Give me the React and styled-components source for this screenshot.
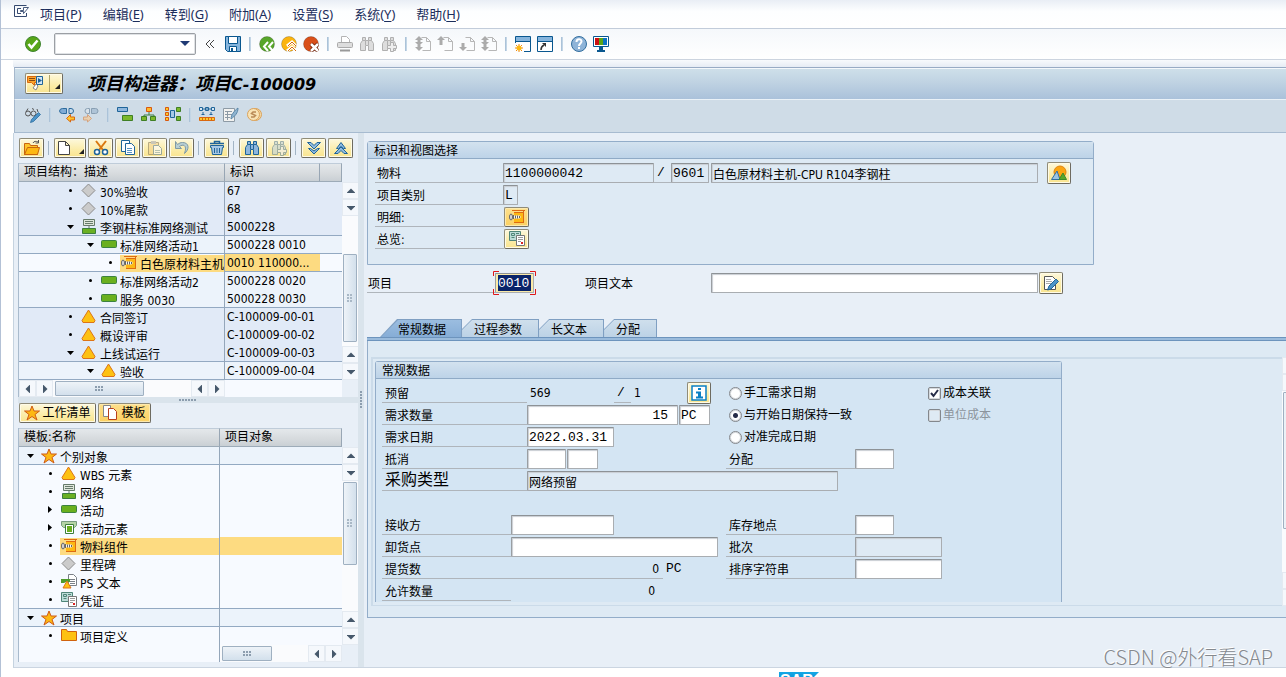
import React from 'react';
import styled, { createGlobalStyle, css } from 'styled-components';

const SANS = '"DejaVu Sans Condensed", "Noto Sans", "Noto Sans CJK SC", sans-serif';
const MENU = '"Noto Sans", "Noto Sans CJK SC", sans-serif';
const MONO = '"Liberation Mono", "Noto Sans CJK SC", monospace';

const Global = createGlobalStyle`
  *, *::before, *::after { box-sizing: border-box; }
  body {
    margin: 0;
    background: #fff;
    color: #000;
    font: 12px/18px ${SANS};
  }
  button, input { font: inherit; color: inherit; margin: 0; }
  button { cursor: pointer; }
`;

/* ---------- frame ---------- */

const Page = styled.div`
  position: relative;
  border-left: 1px solid #b3c1d6;
  overflow: hidden;
`;

const MenuBar = styled.nav`
  display: flex;
  align-items: center;
  gap: 21px;
  height: 29px;
  padding-left: 13px;
  background: linear-gradient(#e9eef5, #fdfeff 40%, #fff);
  border-bottom: 1px solid #c2ccda;
  font: 13px/18px ${MENU};
  color: #1c2e5c;
`;

const MenuItem = styled.button`
  padding: 0;
  border: 0;
  background: none;
  white-space: nowrap;
  u { text-underline-offset: 2px; }
`;

const MenuIcon = styled(MenuItem)`
  display: flex;
  margin: 0 -10px 6px 0;
`;

const SystemBar = styled.div`
  display: flex;
  align-items: center;
  gap: 6px;
  height: 31px;
  padding: 0 24px 1px;
  background: linear-gradient(#f5f8fb, #fff);
  border-bottom: 1px solid #ccd4df;
`;

const IconButton = styled.button`
  display: flex;
  flex: none;
  width: 16px;
  height: 16px;
  padding: 0;
  border: 0;
  background: none;
`;

const Sep = styled.span`
  flex: none;
  width: 2px;
  height: 14px;
  margin: 0 ${p => p.$m ?? 0}px;
  background: linear-gradient(90deg, #9fb9d2, #cfdfec);
`;

const Command = styled.div`
  display: flex;
  align-items: center;
  width: 142px;
  height: 22px;
  margin: 0 3px 0 7px;
  border: 1px solid #9b9fa4;
  border-radius: 2px;
  background: #fff;
  box-shadow: inset 0 0 0 1px #dfe2e5;
  input { flex: 1; min-width: 0; height: 18px; border: 0; background: none; outline: 0; }
  button { display: flex; padding: 0 5px; border: 0; background: none; }
`;

const Collapse = styled.button`
  display: flex;
  padding: 0;
  margin-right: 4px;
  border: 0;
  background: none;
`;

const Frame = styled.div`
  margin: 0 0 0 12px;
  padding-top: 7px;
  background: linear-gradient(#f8fafc, #e6ecf4 7px, transparent 7px);
`;

const TitleBar = styled.header`
  display: flex;
  align-items: center;
  gap: 24px;
  height: 33px;
  margin-left: 1px;
  padding: 0 10px 1px;
  border-top: 1px solid #98abc4;
  border-bottom: 1px solid #eaf1f7;
  border-left: 1px solid #a6b8cc;
  box-shadow: inset 0 1px #f4f8fb;
  background: linear-gradient(#cfe0ea, #c0d3e3 45%, #aac1da);
`;

const Title = styled.h1`
  margin: 0;
  font: italic bold 18px/24px "Noto Sans CJK SC", sans-serif;
  white-space: nowrap;
  span { font: italic bold 16px/24px "DejaVu Sans", sans-serif; }
`;

const AppBar = styled.div`
  display: flex;
  align-items: center;
  gap: 8px;
  height: 33px;
  margin-left: 1px;
  padding: 0 11px 3px 10px;
  border-left: 1px solid #a6b8cc;
  background: #cfdce7;
  border-bottom: 1px solid #a7bbd0;
`;

const Workspace = styled.main`
  display: flex;
  border-left: 1px solid #c5d3e0;
  border-bottom: 1px solid #cbd5e1;
  background: #e8eff7;
`;

/* ---------- buttons ---------- */

const GoldButton = styled.button`
  display: flex;
  align-items: center;
  justify-content: ${p => (p.$split ? 'space-between' : 'center')};
  flex: none;
  gap: 2px;
  width: ${p => (p.$w ? p.$w + 'px' : 'auto')};
  height: ${p => p.$h ?? 20}px;
  padding: 0 1px;
  border: 1px solid;
  border-color: #908c78 #6e6b60 #6e6b60 #908c78;
  border-radius: 2px;
  background: ${p => (p.$on ? 'linear-gradient(#fde08c, #fbd061)' : 'linear-gradient(#fdf8dc, #fbeca8 60%, #f9e48f)')};
  box-shadow: inset 0 0 0 1px ${p => (p.$on ? '#fde9ae' : '#fffbe6')};
  white-space: nowrap;
  line-height: 20px;
`;

const TitleButton = styled(GoldButton)`
  width: 38px;
  height: 21px;
  padding: 0 2px 0 1px;
  i { width: 1px; height: 17px; background: #b0a468; }
`;

/* ---------- left side ---------- */

const Side = styled.aside`
  flex: none;
  width: 344px;
  padding: 0 0 5px 4px;
`;

const TreeTools = styled.div`
  display: flex;
  align-items: center;
  gap: 2px;
  height: 30px;
  padding-left: 1px;
`;

const ToolSep = styled.span`
  width: 1px;
  height: 14px;
  margin: 0 3px 0 2px;
  background: #a3b5c6;
`;

const TreeBox = styled.div`
  display: flex;
  border-left: 1px solid #a9bbcd;
`;

const TreeTable = styled.table`
  width: 323px;
  table-layout: fixed;
  border-collapse: separate;
  border-spacing: 0;
`;

const Col = styled.col`
  width: ${p => (p.$w ? p.$w + 'px' : 'auto')};
`;

const HeadCell = styled.th`
  height: 19px;
  padding: 0 0 0 5px;
  font-weight: normal;
  text-align: left;
  line-height: 17px;
  border-top: 1px solid #bfccd9;
  border-right: 1px solid #98a6b4;
  border-bottom: 1px solid #9dabb8;
  background: linear-gradient(#e4e8eb, #d6dadd 60%, #c9cfd4);
`;

const tones = { a: '#e1eaf7', b: '#ecf3fb', c: '#f7faff' };

const Cell = styled.td`
  height: 18px;
  padding: ${p => (p.$text ? '0 0 0 2px' : 0)};
  overflow: hidden;
  white-space: nowrap;
  line-height: 18px;
  background: ${p => (p.$hot ? '#fddb81' : tones[p.$tone])};
  box-shadow: inset ${p => (p.$edge ? '-1px' : 0)} 0 #94a6ba, inset 0 ${p => (p.$line ? '-1px' : 0)} #93a9c2;
`;

const Node = styled.div`
  display: flex;
  align-items: flex-start;
  height: 17px;
  margin-right: 1px;
  padding-left: ${p => 1 + p.$level * 20}px;
  overflow: hidden;
`;

const Twist = styled.span`
  display: flex;
  flex: none;
  align-items: center;
  justify-content: center;
  width: 20px;
  height: 16px;
`;

const NodeBody = styled.span`
  display: flex;
  flex: 1;
  height: 17px;
  gap: 3px;
  padding-left: 1px;
  background: ${p => (p.$hot ? '#fddb81' : 'none')};
  svg { flex: none; }
  span { line-height: 20px; }
`;

const VBar = styled.div`
  display: flex;
  flex-direction: column;
  flex: none;
  width: 16px;
  margin-top: ${p => p.$top ?? 0}px;
  background: #f9fbfd;
`;

const Track = styled.div`
  flex: 1;
  display: flex;
  flex-direction: ${p => (p.$row ? 'row' : 'column')};
  padding: ${p => (p.$row ? `1px 1px 0 ${p.$skip}px` : `${p.$skip}px 1px 0`)};
  background: #fafbfd;
`;

const Thumb = styled.div`
  display: flex;
  align-items: center;
  justify-content: center;
  width: ${p => (p.$row ? p.$len + 'px' : '14px')};
  height: ${p => (p.$row ? '15px' : p.$len + 'px')};
  border: 1px solid #9fb0c1;
  border-radius: 1px;
  background: linear-gradient(${p => (p.$row ? '180deg' : '90deg')}, #eef3f8, #d3e0ec);
`;

const Arrow = styled.button`
  display: flex;
  align-items: center;
  justify-content: center;
  flex: none;
  width: 17px;
  height: 17px;
  padding: 0;
  border: 1px solid #e4eaf1;
  background: #f5f8fc;
`;

const HBar = styled.div`
  display: flex;
  height: 17px;
  margin-right: 16px;
  border-left: 1px solid #a9bbcd;
  background: #f7faff;
`;

const HPart = styled.div`
  display: flex;
  width: ${p => p.$w}px;
  border-right: ${p => (p.$edge ? '1px solid #94a6ba' : 0)};
`;

const Grip = styled.div`
  display: flex;
  align-items: center;
  justify-content: center;
  background: #dae4ec;
  ${p => (p.$col ? css`flex: none; width: 6px;` : css`height: 6px;`)}
`;

const SwitchBar = styled.div`
  display: flex;
  align-items: flex-start;
  gap: 2px;
  height: 25px;
  padding-left: 1px;
`;

/* ---------- right side ---------- */

const Detail = styled.section`
  flex: 1;
  min-width: 0;
  padding: 8px 0 0 3px;
  overflow: hidden;
`;

const Panel = styled.section`
  max-width: ${p => p.$max}px;
  border: 1px solid #93adc9;
  border-bottom-width: ${p => (p.$open ? 0 : 1)}px;
  border-radius: 3px 3px 0 0;
  background: ${p => p.$bg};
`;

const PanelTitle = styled.h2`
  height: 17px;
  margin: 0;
  padding-left: 6px;
  font: 12px/18px ${SANS};
  border-bottom: 1px solid #8faac6;
  background: linear-gradient(#d3e2ef, #bdd3e8);
`;

const Rows = styled.div`
  display: flex;
  flex-direction: column;
  gap: 2px;
  padding: ${p => p.$pad};
`;

const Row = styled.div`
  display: flex;
  align-items: center;
  height: 20px;
`;

const Part = styled.div`
  display: flex;
  align-items: center;
  flex: none;
  width: ${p => p.$w}px;
  height: 20px;
`;

const Label = styled.label`
  flex: none;
  width: ${p => p.$w}px;
  height: 20px;
  padding-left: ${p => p.$in ?? 3}px;
  border-bottom: 1px solid ${p => (p.$plain ? 'transparent' : '#afb5bb')};
  font-size: ${p => (p.$big ? 16 : 12)}px;
  line-height: ${p => (p.$big ? 18 : 22)}px;
  white-space: nowrap;
`;

const Value = styled.span`
  flex: none;
  width: ${p => p.$w}px;
  height: 20px;
  padding: 0 4px 0 3px;
  border-bottom: 1px solid ${p => (p.$line ? '#afb5bb' : 'transparent')};
  text-align: ${p => (p.$right ? 'right' : 'left')};
  font-family: ${p => (p.$mono ? MONO : SANS)};
  font-size: ${p => (p.$mono ? 13 : 12)}px;
  line-height: 20px;
`;

const Field = styled.input`
  flex: none;
  width: ${p => p.$w}px;
  height: 20px;
  margin-right: ${p => p.$gap ?? 0}px;
  padding: 0 ${p => (p.$right ? 9 : 2)}px 0 1px;
  border: 1px solid #a9adb1;
  border-top-color: #8d9296;
  border-left-color: #9a9ea2;
  border-radius: 1px;
  outline: 0;
  background: ${p => (p.readOnly ? '#deeaf4' : '#fff')};
  box-shadow: inset 1px 1px 1px #c9ced3;
  font: ${p => (p.$mono ? `13px/18px ${MONO}` : `12px/18px ${SANS}`)};
  text-align: ${p => (p.$right ? 'right' : 'left')};
`;

const FocusField = styled(Field)`
  padding: 1px 2px;
  color: #fff;
  background: linear-gradient(#0a246a, #0a246a) content-box, #fbeaa8;
  box-shadow: none;
`;

const FocusBox = styled.div`
  position: relative;
  display: flex;
  svg { position: absolute; left: -2px; top: -2px; pointer-events: none; }
`;

const Tabs = styled.div`
  display: flex;
  height: 18px;
  margin-top: 26px;
  padding-left: 13px;
`;

const Tab = styled.button`
  position: relative;
  isolation: isolate;
  height: 18px;
  padding: 2px ${p => (p.$on ? '16px 0 18px' : '17px 0 12px')};
  border: 0;
  background: #7f9fc2;
  line-height: 18px;
  --cut: polygon(${p => (p.$on ? '0 100%, 17px 0' : '0 100%, 0 10px, 10px 0')}, 100% 0, 100% 100%);
  clip-path: var(--cut);
  &::before {
    content: '';
    position: absolute;
    z-index: -1;
    inset: 1px 1px 0 ${p => (p.$on ? 1 : 0)}px;
    clip-path: var(--cut);
    background: ${p => (p.$on ? 'linear-gradient(#9bbde0, #86add6)' : 'linear-gradient(#cfdfec, #bcd2e6)')};
  }
`;

const TabBody = styled.div`
  display: flex;
  border-top: 1px solid #6d94bd;
  box-shadow: inset 0 2px #9abbdc, inset 0 3px #6d94bd, inset 1px 0 #93adc9, inset 0 -1px #93adc9;
  padding: 19px 0 12px 4px;
  background: #deeaf4;
`;

const Scroller = styled.div`
  flex: 1;
  min-width: 0;
  padding: 2px 2px 3px;
  border: solid #cbdbe9;
  border-width: 2px 0 1px 2px;
`;

const ScrollEdge = styled.div`
  display: flex;
  flex: none;
  width: 4px;
  overflow: hidden;
`;

const Choice = styled.label`
  display: flex;
  align-items: center;
  gap: 2px;
  height: 20px;
  padding-left: ${p => p.$in ?? 0}px;
  color: ${p => (p.$off ? '#8c949c' : '#000')};
  line-height: 22px;
  white-space: nowrap;
  input {
    appearance: none;
    flex: none;
    width: 13px;
    height: 13px;
    border: 1px solid #83878c;
    background: ${p => (p.$off ? '#deeaf4' : '#fff')};
    box-shadow: inset 0 0 0 1px #d5d9dd;
  }
  input[type='radio'] { border-radius: 50%; }
  input[type='radio']:checked { background: radial-gradient(circle, #262c48 0 2px, #fff 3px); }
  input[type='checkbox'] { border-radius: 2px; }
`;

const TickWrap = styled.span`
  position: relative;
  display: flex;
  svg { position: absolute; left: 2px; top: 2px; pointer-events: none; }
`;

const StatusBar = styled.footer`
  display: flex;
  height: 9px;
  padding: 4px 0 0 778px;
  overflow: hidden;
  background: #fff;
`;

const Brand = styled.span`
  width: 40px;
  height: 20px;
  padding-left: 1px;
  clip-path: polygon(0 0, 100% 0, 50% 100%, 0 100%);
  background: linear-gradient(#14a8e6, #0b6fc0);
  color: #fff;
  font: bold 16px/18px "Liberation Sans", sans-serif;
`;

const Watermark = styled.div`
  position: absolute;
  right: 13px;
  bottom: 6px;
  font: 300 20px/28px "Noto Sans CJK SC", sans-serif;
  color: #85898e;
  text-shadow: -1px -1px #fff;
  white-space: nowrap;
`;

/* ---------- drawings ---------- */

const Svg = ({ w = 16, h = 16, children }) => (
  <svg width={w} height={h} viewBox={`0 0 ${w} ${h}`} fill="none" aria-hidden="true">{children}</svg>
);

const Tri = ({ d, c = '#46586b' }) => {
  const shapes = { up: 'M0 5.500L4 1.500L8 5.500V6H0z', down: 'M0 2H8V2.500L4 6.500L0 2.500z', left: 'M6 0V8H5.500L1.500 4L5.500 0z', right: 'M2 0V8H2.500L6.500 4L2.500 0z' };
  return <Svg w={8} h={8}><path d={shapes[d]} fill={c} /></Svg>;
};

const Dots = ({ cols, rows, c = '#8c9dae' }) => (
  <Svg w={cols * 3} h={rows * 3}>
    {Array.from({ length: cols * rows }, (_, i) => (
      <rect key={i} x={(i % cols) * 3} y={Math.floor(i / cols) * 3} width="2" height="2" fill={c} />
    ))}
  </Svg>
);

const Corner = () => <Svg w={5} h={16}><path d="M5 9v5H0z" fill="#222" /></Svg>;

const Binoculars = ({ s, f, plus }) => (
  <>
    <path d="M3.500 1.500h3v3h3v-3h3v3l2 3v7h-5v-5h-3v5h-5v-7l2-3z" fill={f} stroke={s} />
    <path d="M3.500 4.500h3M9.500 4.500h3M6.500 5v4M9.500 5v4" stroke={s} />
    {plus && <path d="M9.500 6.500h3v3h3v3h-3v3h-3v-3h-3v-3h3z" fill="#eee" stroke={s} />}
  </>
);

const PageNav = ({ arrows }) => (
  <>
    <path d="M6.500 1.500h5l4 4v9h-8M11.500 1.500v4h4" stroke="#b7b7b7" />
    <path d={arrows} fill="#ababab" />
  </>
);

const Bubble = ({ children, fill }) => (
  <>
    <circle cx="8" cy="8" r="7.500" fill={fill} stroke="#0003" />
    {children}
  </>
);

const icons = {
  exit: <><path d="M12.500 8v3.500H.5V.5h12" stroke="#34486e" /><path d="M7 3.500H3.500v5H7" stroke="#34486e" /><path d="M6.500 5.500h3v-3h5l-5 6v-2h-3z" fill="#fff" stroke="#34486e" strokeWidth=".9" /></>,
  ok: <><circle cx="8" cy="8" r="7.500" fill="#58a618" stroke="#3f8430" /><path d="M3.500 8l3 3.500 6-7" stroke="#fff" strokeWidth="2.500" /></>,
  save: <><path d="M.5.500h15v15H2.500l-2-2z" fill="#85b4dc" stroke="#09578f" /><path d="M3.500.500h9v7h-9z" fill="#fff" stroke="#09578f" /><path d="M4.500 10.500h7v5h-7z" fill="#fff" stroke="#09578f" /><path d="M6 12h2v3H6z" fill="#09578f" /></>,
  back: <Bubble fill="#58a62a"><path d="M9 6l-4 4.500L9 15M14 6l-4 4.500 4 4.500" stroke="#fff" strokeWidth="2" /></Bubble>,
  upc: <Bubble fill="#fbb40f"><path d="M6 10l5-4 4 4M6 15l5-4 4 4" stroke="#fff" strokeWidth="3" /><path d="M7 10l4-4 4 4M7 15l4-4 4 4" stroke="#d6690c" /></Bubble>,
  cancel: <Bubble fill="#d9501a"><path d="M8 8l7 7M15 8l-7 7" stroke="#6d2008" strokeWidth="4" /><path d="M8 8l7 7M15 8l-7 7" stroke="#fff" strokeWidth="2.500" /></Bubble>,
  print: <><path d="M4.500 7V.5h5l3 3V7" fill="#fff" stroke="#b4b4b4" /><rect x=".5" y="6.500" width="15" height="5" rx="1" fill="#ddd" stroke="#aaa" /><path d="M3 14.500h10" stroke="#999" strokeWidth="2" /></>,
  findG: <Binoculars s="#b0b0b0" f="#ddd" />,
  findMoreG: <Binoculars s="#b0b0b0" f="#ddd" plus />,
  firstPage: <PageNav arrows="M4 0l4 4H5.500v2H8L4 10 0 6h2.500V4H0zM2.500 9h3v2H8l-4 4-4-4h2.500z" />,
  prevPage: <PageNav arrows="M4 0l4 4H5.500v5h-3V4H0z" />,
  nextPage: <PageNav arrows="M2.500 7h3v4H8l-4 4-4-4h2.500z" />,
  lastPage: <PageNav arrows="M4 0l4 4H5.500v2H8l-4 4-4-4h2.500V4H0zM2.500 9h3v2H8l-4 4-4-4h2.500z" />,
  newWin: <><path d="M.5 7V.5h15v15H9" stroke="#09578f" fill="#fff" /><path d="M1 1h14v4H1z" fill="#85b4dc" /><path d="M0 5.500h16" stroke="#09578f" /><path d="M4 8v8M0 12h8M1 9l6 6M7 9l-6 6" stroke="#f08a12" /><circle cx="4" cy="12" r="2.500" fill="#fdb913" /></>,
  shortcut: <><path d="M.5.500h15v15H.5z" stroke="#09578f" fill="#fff" /><path d="M1 1h14v4H1z" fill="#85b4dc" /><path d="M0 5.500h16" stroke="#09578f" /><path d="M4 14c0-3 1-4 3-5" stroke="#333" strokeWidth="1.500" /><path d="M5 7h4v4z" fill="#333" /></>,
  help: <><circle cx="8" cy="8" r="7.500" fill="#8fb4d8" stroke="#336e9e" /><path d="M5.500 6c0-3.500 5-3.500 5-.5 0 2-2.500 2-2.500 4.500M8 11v2" stroke="#fff" strokeWidth="2" /></>,
  monitor: <><path d="M.5.500h15v10H.5z" fill="#fff" stroke="#09578f" /><path d="M2 2h4v7H2z" fill="#cc1010" /><path d="M6 2h4v7H6z" fill="#5aa616" /><path d="M10 2h4v7h-4z" fill="#0c73c2" /><path d="M6 11h4v3h2v2H4v-2h2z" fill="#09578f" /></>,
  glasses: <><path d="M1 5l2-3.500M7 1.500l2 1M12 2l1 3" stroke="#555" /><circle cx="3" cy="6.500" r="2.500" stroke="#555" /><circle cx="8.500" cy="6.500" r="2.500" stroke="#555" /><path d="M13.500 5.500l2 2-7 7-3 1 1-3z" fill="#4d94c8" stroke="#2c6d9f" strokeWidth=".8" /></>,
  prev: <><path d="M.5 4a3 3 0 0 1 3-2.500h4v5h-4A3 3 0 0 1 .5 4z" fill="#7fabd5" stroke="#2c6a9c" /><path d="M10 1.500h2a2.500 2.500 0 0 1 0 5h-2z" fill="#c6dcef" stroke="#2c6a9c" /><path d="M7.500 11.500l4-4v2.500h4v3h-4V15z" fill="#fdc52c" stroke="#d9680f" /></>,
  next: <g opacity=".6"><path d="M4.500 1.500h2v5h-2a2.500 2.500 0 0 1 0-5z" fill="#dfe7ee" stroke="#5b7892" /><path d="M8.500 1.500h4a2.500 2.500 0 0 1 0 5h-4z" fill="#9ab5ce" stroke="#5b7892" /><path d="M8.500 11.500l-4-4v2.500h-4v3h4V15z" fill="#fdc98a" stroke="#d9803f" /></g>,
  gantt: <><path d="M.5.500h10v4H.5z" fill="#8fb7dd" stroke="#1f6499" /><path d="M5.500 8.500h10v5h-10z" fill="#7cb82b" stroke="#3f7f25" /></>,
  hierarchy: <><path d="M8 5v3M3 11V8h10v3" stroke="#3f7f45" /><path d="M5.500.500h5v4h-5z" fill="#fdb92b" stroke="#d9580f" /><path d="M.5 9.500h5v4h-5zM9.500 9.500h5v4h-5z" fill="#7cb82b" stroke="#3f7f25" /></>,
  network: <><path d="M.5.500h3v3h-3zM.5 5.500h3v3h-3zM.5 10.500h3v3h-3z" fill="#fdc92b" stroke="#d9580f" /><path d="M5.500 3.500h4v7h-4z" fill="#a8c9e6" stroke="#1f6499" /><path d="M11.500.500h4v4h-4zM11.500 9.500h4v4h-4z" fill="#7cb82b" stroke="#3f7f25" /></>,
  capacity: <><path d="M.5.500h3v3h-3zM6.500.500h3v3h-3zM12.500.500h3v3h-3zM3 2h10" stroke="#1f6499" fill="#d5e6f3" /><path d="M4 5v3M12 5v3M2.500 7.500h3M10.500 7.500h3" stroke="#1f6499" /><path d="M.5 10.500h15v3H.5z" fill="#fdc92b" stroke="#d9680f" /><path d="M3.500 11v2M6.500 11v2M9.500 11v2M12.500 11v2" stroke="#d9680f" /></>,
  edit: <><path d="M.5 1.500h11v13H.5z" fill="#f2f2f0" stroke="#8d9aa5" /><path d="M2 4.500h7M2 7.500h7M2 10.500h5M4.500 4v9" stroke="#8d9aa5" /><path d="M15 1c0 5-3 8-7 11 0-4 3-8 7-11z" fill="#8fb4d0" stroke="#5b87a8" /></>,
  coin: <><circle cx="8.500" cy="7.500" r="6" fill="#f3d9a8" stroke="#dba25a" /><circle cx="6.500" cy="7.500" r="6" fill="#f8e3b5" stroke="#dba25a" /><path d="M9 5H6L4.500 6.500l4 2L7 10H4" stroke="#b98a56" strokeWidth="1.500" /></>,
  speech: <><path d="M.5 1.500h9v6h-2v3l-3-3h-4z" fill="#fda52b" stroke="#d9680f" /><path d="M2 3.500h6M2 5.500h6" stroke="#8a4a10" /><path d="M9.500 1.500h6v8h-6z" fill="#d0e4f5" stroke="#1f6499" /><path d="M11 3v5l4-2.500z" fill="#1f6499" /><path d="M6 13l3-4 2 2-2 4z" fill="#fff" stroke="#888" /></>,
  open: <><path d="M.5 14.500v-11h5l1 2h7v9z" fill="#fdc52c" stroke="#c8650f" /><path d="M3.500 7.500h12l-2 7H.5z" fill="#fdb813" stroke="#c8650f" /><path d="M9 3c1-2 3-2 5-1M14.500 0v3h-3" stroke="#555" /></>,
  create: <path d="M2.500 1.500h7l4 4v9h-11zM9.500 1.500v4h4" fill="#fff" stroke="#444" />,
  cut: <><path d="M3 1l7 9M13 1L6 10" stroke="#d9780f" strokeWidth="2" /><circle cx="4" cy="12" r="2.500" fill="#fff" stroke="#1f6499" strokeWidth="1.500" /><circle cx="12" cy="12" r="2.500" fill="#fff" stroke="#1f6499" strokeWidth="1.500" /></>,
  copy: <><path d="M1.500.500h8v11h-8z" fill="#fff" stroke="#1f6499" /><path d="M5.500 3.500h6l3 3v8h-9z" fill="#fff" stroke="#1f6499" /><path d="M7 8.500h5M7 10.500h5M7 12.500h5" stroke="#5b93c2" /></>,
  paste: <g opacity=".6"><path d="M1.500 2.500h10v12h-10z" fill="#f5d48c" stroke="#8a7c58" /><path d="M4 1h5v3H4z" fill="#aaa" /><path d="M6.500 5.500h5l3 3v6h-8z" fill="#fff" stroke="#5a7d96" /><path d="M8 10.500h5M8 12.500h5" stroke="#8aa8bd" /></g>,
  undo: <path d="M1.500 1.500v7h6L5.500 6.500c4-3 8-1 5 7 5-4 5-11-2-11-2 0-3 .5-5 2z" fill="#b8cfd4" stroke="#7f9aa4" />,
  trash: <><path d="M1 3.500h14M5.500 3V1.500h5V3" stroke="#1f6499" strokeWidth="1.500" /><path d="M1.500 5.500h13v2h-1l-1 7h-9l-1-7h-1z" fill="#a8c9e6" stroke="#1f6499" /><path d="M5.500 8v5M8 8v5M10.500 8v5" stroke="#1f6499" /></>,
  find: <Binoculars s="#1f6499" f="#8fb7dd" />,
  findMore: <g opacity=".65"><Binoculars s="#6f8c98" f="#c5d5d8" plus /></g>,
  expand: <><path d="M1.500 2.500h3.500l3 3 3-3h3.500L8 9z" fill="#8fbbe0" stroke="#1f6499" /><path d="M4.500 8.500L8 11l3.500-2.500h2L8 14 2.500 8.500z" fill="#8fbbe0" stroke="#1f6499" /></>,
  collapse: <><path d="M1.500 13.500h3.500l3-3 3 3h3.500L8 7z" fill="#8fbbe0" stroke="#1f6499" /><path d="M3.500 8.500L8 2.500l4.500 6h-2L8 6.500l-2.500 2z" fill="#8fbbe0" stroke="#1f6499" /></>,
  milestone: <path d="M7.500 1l6.500 6.500L7.500 14 1 7.500z" fill="#cbcbcb" stroke="#8c8c8c" />,
  net: <><path d="M2.500.500h11v6h-11z" fill="#dfe6dc" stroke="#667a6a" /><path d="M4 2.500h8M4 4.500h8M8 7v3" stroke="#667a6a" /><path d="M1.500 9.500h13v5h-13z" fill="#6ab023" stroke="#3c7d3d" /></>,
  activity: <rect x=".5" y="3.500" width="15" height="7" rx="1" fill="#6ab01e" stroke="#3c8240" />,
  wbs: <path d="M7.500 1L14 11.500 13 13.500H2L1 11.500z" fill="#fdc113" stroke="#dd7417" strokeLinejoin="round" />,
  star: <path d="M8 1l2 5h5.500l-4.500 3.500 2 5.500-5-3.500L3 15l2-5.500L.5 6H6z" fill="#fdb813" stroke="#cf5a16" />,
  element: <><path d="M.5 1.500h15v4l-2 2h-11l-2-2z" fill="#b5d4a5" stroke="#7a9c80" /><path d="M4.500 4.500h8v9h-8z" fill="#fff" stroke="#3c7d3d" /><path d="M6 6h5v6H6z" fill="#6ab01e" /></>,
  component: <><path d="M3 1.500h13M5 3.500h9.500v10H5" fill="#fdb813" stroke="#dd6a13" /><path d="M14.500 2v12" stroke="#dd6a13" /><ellipse cx="2" cy="8" rx="1.500" ry="3" fill="#ddd" stroke="#666" /><path d="M4 6.500h6.500L12 8l-1.500 1.500H4z" fill="#f4f4f4" /><path d="M4.500 6v4M6.500 6.500v3M8.500 6.500v3M10.500 7v2" stroke="#666" /></>,
  pstext: <><path d="M7.500.500h5l3 3v8h-8zM9 5.500h5M9 7.500h5M9 9.500h5" fill="#fff" stroke="#7a8087" /><path d="M0 5h9v3H5L3 9H0z" fill="#4f9c2c" /><path d="M6 7l4 7H2z" fill="#fdc113" stroke="#dd7417" /></>,
  document: <><path d="M.5.500h11v9H.5z" fill="#bcdcd8" stroke="#4f8578" /><path d="M2.500 2.500h3v2h-3zM7 2.500h3M2.500 6.500h3" stroke="#4f8578" /><path d="M7.500 4.500h8v10h-8z" fill="#fff" stroke="#777" /><path d="M9 6.500h5M9 8.500h5M9 10.500h3" stroke="#999" /><path d="M12 11h2v2h-2z" fill="#d22" /></>,
  folder: <path d="M.5 12.500V1.500h5l1 2h9v9z" fill="#fdc113" stroke="#d0620f" />,
  template: <><path d="M.5.500h7v11h-7z" fill="#fff" stroke="#888" /><path d="M5.500 3.500h5l3 3v8h-8z" fill="#fff" stroke="#b8401c" /></>,
  picture: <><circle cx="9" cy="7" r="6" fill="#fba512" stroke="#e08410" /><path d="M.5 14.500L6 6l3 8.500z" fill="#9cc3e2" stroke="#2e6ea2" /><path d="M8 14.500L12 8l3.500 6.500z" fill="#5aa62a" stroke="#3c8a2a" /></>,
  note: <><path d="M1.500 1.500h8l3 3v10h-11z" fill="#fff" stroke="#555" /><path d="M3 4.500h5M3 6.500h6M3 8.500h5" stroke="#aaa" /><path d="M13 4l2.500 2.500L8 14l-3.500 1L6 11z" fill="#4d94c8" stroke="#1f6499" /></>,
  info: <><path d="M1 1h14v14H1z" fill="#fff" stroke="#0a80c4" strokeWidth="1.500" /><path d="M7 3h3v2H7zM5 6.500h5v5h2v2H5v-2h2v-3H5z" fill="#0a80c4" /></>,
};

const Icon = ({ n }) => <Svg>{icons[n]}</Svg>;

/* ---------- data ---------- */

const menus = [['项目', 'P'], ['编辑', 'E'], ['转到', 'G'], ['附加', 'A'], ['设置', 'S'], ['系统', 'Y'], ['帮助', 'H']];

const systemTools = ['save', '|', 'back', 'upc', 'cancel', '|', 'print', 'findG', 'findMoreG', '|', 'firstPage', 'prevPage', 'nextPage', 'lastPage', '|', 'newWin', 'shortcut', '|', 'help', 'monitor'];
const appTools = ['glasses', '|', 'prev', 'next', '|', 'gantt', 'hierarchy', 'network', '|', 'capacity', 'edit', 'coin'];
const treeTools = ['open', '|', 'create', 'cut', 'copy', 'paste', 'undo', '|', 'trash', '|', 'find', 'findMore', '|', 'expand', 'collapse'];

const projectTree = [
  { l: 2, m: '·', i: 'milestone', t: '30%验收', id: '67', tone: 'a' },
  { l: 2, m: '·', i: 'milestone', t: '10%尾款', id: '68', tone: 'a' },
  { l: 2, m: 'v', i: 'net', t: '李钢柱标准网络测试', id: '5000228', tone: 'a', line: true },
  { l: 3, m: 'v', i: 'activity', t: '标准网络活动1', id: '5000228 0010', tone: 'b', line: true },
  { l: 4, m: '·', i: 'component', t: '白色原材料主机', id: '0010 110000...', tone: 'c', line: true, hot: true },
  { l: 3, m: '·', i: 'activity', t: '标准网络活动2', id: '5000228 0020', tone: 'b' },
  { l: 3, m: '·', i: 'activity', t: '服务 0030', id: '5000228 0030', tone: 'b', line: true },
  { l: 2, m: '·', i: 'wbs', t: '合同签订', id: 'C-100009-00-01', tone: 'a' },
  { l: 2, m: '·', i: 'wbs', t: '概设评审', id: 'C-100009-00-02', tone: 'a' },
  { l: 2, m: 'v', i: 'wbs', t: '上线试运行', id: 'C-100009-00-03', tone: 'a', line: true },
  { l: 3, m: 'v', i: 'wbs', t: '验收', id: 'C-100009-00-04', tone: 'b', line: true },
];

const templateTree = [
  { l: 0, m: 'v', i: 'star', t: '个别对象', tone: 'b', line: true },
  { l: 1, m: '·', i: 'wbs', t: 'WBS 元素', tone: 'c' },
  { l: 1, m: '·', i: 'net', t: '网络', tone: 'c' },
  { l: 1, m: '>', i: 'activity', t: '活动', tone: 'c' },
  { l: 1, m: '>', i: 'element', t: '活动元素', tone: 'c' },
  { l: 1, m: '·', i: 'component', t: '物料组件', tone: 'c', hot: true },
  { l: 1, m: '·', i: 'milestone', t: '里程碑', tone: 'c' },
  { l: 1, m: '·', i: 'pstext', t: 'PS 文本', tone: 'c' },
  { l: 1, m: '·', i: 'document', t: '凭证', tone: 'c', line: true },
  { l: 0, m: 'v', i: 'star', t: '项目', tone: 'b', line: true },
  { l: 1, m: '·', i: 'folder', t: '项目定义', tone: 'c' },
];

/* ---------- composed parts ---------- */

const Marker = ({ m }) => {
  if (m === 'v') return <Svg w={7} h={4}><path d="M0 0h7L3.500 4z" fill="#000" /></Svg>;
  if (m === '>') return <Svg w={4} h={7}><path d="M0 0v7l4-3.500z" fill="#000" /></Svg>;
  return <Svg w={3} h={3}><circle cx="1.500" cy="1.500" r="1.500" fill="#000" /></Svg>;
};

const TreeNode = ({ r }) => (
  <Node $level={r.l}>
    <Twist><Marker m={r.m} /></Twist>
    <NodeBody $hot={r.hot}><Icon n={r.i} /><span>{r.t}</span></NodeBody>
  </Node>
);

const VScroll = ({ skip, len, top }) => (
  <VBar $top={top}>
    <Arrow aria-label="上移"><Tri d="up" /></Arrow>
    <Arrow aria-label="下移"><Tri d="down" /></Arrow>
    <Track $skip={skip}><Thumb $len={len}><Dots cols={2} rows={3} c="#a9b8c6" /></Thumb></Track>
    <Arrow aria-label="上一页"><Tri d="up" /></Arrow>
    <Arrow aria-label="下一页"><Tri d="down" /></Arrow>
  </VBar>
);

const Bar = ({ list, m }) => list.map((n, i) => (n === '|' ? <Sep key={i} $m={m} /> : <IconButton key={i} aria-label={n}><Icon n={n} /></IconButton>));

function ProjectTree() {
  return (
    <>
      <TreeBox>
        <TreeTable>
          <colgroup><Col $w={206} /><Col $w={95} /><Col /></colgroup>
          <thead><tr><HeadCell>项目结构：描述</HeadCell><HeadCell>标识</HeadCell><HeadCell /></tr></thead>
          <tbody>
            {projectTree.map(r => (
              <tr key={r.id}>
                <Cell $tone={r.tone} $line={r.line} $edge><TreeNode r={r} /></Cell>
                <Cell $tone={r.tone} $line={r.line} $hot={r.hot} $text>{r.id}</Cell>
                <Cell $tone={r.tone} $line={r.line} />
              </tr>
            ))}
          </tbody>
        </TreeTable>
        <VScroll top={19} skip={38} len={88} />
      </TreeBox>
      <HBar>
        <HPart $w={206}>
          <Arrow aria-label="左移"><Tri d="left" /></Arrow>
          <Arrow aria-label="右移"><Tri d="right" /></Arrow>
          <Track $row $skip={2}><Thumb $row $len={89}><Dots cols={3} rows={2} /></Thumb></Track>
          <Arrow aria-label="左页"><Tri d="left" /></Arrow>
          <Arrow aria-label="右页"><Tri d="right" /></Arrow>
        </HPart>
      </HBar>
    </>
  );
}

function TemplateTree() {
  return (
    <>
      <TreeBox>
        <TreeTable>
          <colgroup><Col $w={201} /><Col /></colgroup>
          <thead><tr><HeadCell>模板:名称</HeadCell><HeadCell>项目对象</HeadCell></tr></thead>
          <tbody>
            {templateTree.map(r => (
              <tr key={r.t}>
                <Cell $tone={r.tone} $line={r.line} $edge><TreeNode r={r} /></Cell>
                <Cell $tone={r.tone} $line={r.line} $hot={r.hot} />
              </tr>
            ))}
          </tbody>
        </TreeTable>
        <VScroll top={19} skip={1} len={83} />
      </TreeBox>
      <HBar>
        <HPart $w={201} $edge />
        <HPart $w={122}>
          <Track $row $skip={2}><Thumb $row $len={50}><Dots cols={3} rows={2} /></Thumb></Track>
          <Arrow aria-label="左移"><Tri d="left" /></Arrow>
          <Arrow aria-label="右移"><Tri d="right" /></Arrow>
        </HPart>
      </HBar>
    </>
  );
}

function IdentityPanel() {
  return (
    <Panel $max={727} $bg="#deeaf4">
      <PanelTitle>标识和视图选择</PanelTitle>
      <Rows $pad="4px 7px 15px">
        <Row>
          <Label $w={128} $in={2} htmlFor="mat">物料</Label>
          <Field id="mat" $w={151} $mono readOnly defaultValue="1100000042" />
          <Value $w={17} $line $mono>/</Value>
          <Field aria-label="工厂" $w={38} $gap={2} $mono readOnly defaultValue="9601" />
          <Field aria-label="物料描述" $w={327} $gap={9} readOnly defaultValue="白色原材料主机-CPU R104李钢柱" />
          <GoldButton $w={24} $h={22} aria-label="图片"><Icon n="picture" /></GoldButton>
        </Row>
        <Row>
          <Label $w={128} $in={2} htmlFor="cat">项目类别</Label>
          <Field id="cat" $w={15} $mono readOnly defaultValue="L" />
        </Row>
        <Row>
          <Label $w={129} $in={2} htmlFor="detail">明细:</Label>
          <GoldButton id="detail" $w={25} $on><Icon n="component" /></GoldButton>
        </Row>
        <Row>
          <Label $w={129} $in={2} htmlFor="overview">总览:</Label>
          <GoldButton id="overview" $w={25}><Icon n="document" /></GoldButton>
        </Row>
      </Rows>
    </Panel>
  );
}

function ItemRow() {
  return (
    <Rows $pad="8px 0 0">
      <Row>
        <Label $w={128} $in={1} htmlFor="item">项目</Label>
        <FocusBox>
          <FocusField id="item" $w={39} $mono defaultValue="0010" />
          <Svg w={43} h={24}><path d="M.5 5V.5H6M37 .5h5.500V5M.5 18v5.500H6M37 23.500h5.500V18" stroke="#e01818" /></Svg>
        </FocusBox>
        <Label as="span" $w={49} $plain />
        <Label $w={128} $in={2} $plain htmlFor="itemText">项目文本</Label>
        <Field id="itemText" $w={327} $gap={1} />
        <GoldButton $w={24} $h={22} aria-label="编辑文本"><Icon n="note" /></GoldButton>
      </Row>
    </Rows>
  );
}

function GeneralPanel() {
  return (
    <Panel $max={687} $bg="#d4e5f3" $open>
      <PanelTitle>常规数据</PanelTitle>
      <Rows $pad="4px 6px 1px">
        <Row>
          <Part $w={344}>
            <Label as="span" $w={145}>预留</Label>
            <Value $w={87}>569</Value>
            <Value $w={17} $line $mono>/</Value>
            <Value $w={56}>1</Value>
            <GoldButton $w={24} $h={22} aria-label="信息"><Icon n="info" /></GoldButton>
          </Part>
          <Part $w={202}><Choice $in={3}><input type="radio" name="date" />手工需求日期</Choice></Part>
          <Choice><TickWrap><input type="checkbox" defaultChecked /><Svg w={9} h={9}><path d="M1 4l2.500 3L8 1" stroke="#262c48" strokeWidth="2" /></Svg></TickWrap>成本关联</Choice>
        </Row>
        <Row>
          <Part $w={344}>
            <Label $w={145} htmlFor="qty">需求数量</Label>
            <Field id="qty" $w={151} $gap={1} $mono $right defaultValue="15" />
            <Field aria-label="单位" $w={31} $mono defaultValue="PC" />
          </Part>
          <Part $w={202}><Choice $in={3}><input type="radio" name="date" defaultChecked />与开始日期保持一致</Choice></Part>
          <Choice $off><input type="checkbox" disabled />单位成本</Choice>
        </Row>
        <Row>
          <Part $w={344}>
            <Label $w={145} htmlFor="day">需求日期</Label>
            <Field id="day" $w={87} $mono defaultValue="2022.03.31" />
          </Part>
          <Choice $in={3}><input type="radio" name="date" />对准完成日期</Choice>
        </Row>
        <Row>
          <Part $w={344}>
            <Label $w={145} htmlFor="offset">抵消</Label>
            <Field id="offset" $w={39} $gap={1} />
            <Field aria-label="抵消单位" $w={31} />
          </Part>
          <Label $w={129} htmlFor="assign">分配</Label>
          <Field id="assign" $w={39} />
        </Row>
        <Row>
          <Label $w={145} $big htmlFor="buy">采购类型</Label>
          <Field id="buy" $w={311} readOnly defaultValue="网络预留" />
        </Row>
        <Row />
        <Row>
          <Part $w={344}>
            <Label $w={129} htmlFor="recv">接收方</Label>
            <Field id="recv" $w={103} />
          </Part>
          <Label $w={129} htmlFor="store">库存地点</Label>
          <Field id="store" $w={39} />
        </Row>
        <Row>
          <Part $w={344}>
            <Label $w={129} htmlFor="unload">卸货点</Label>
            <Field id="unload" $w={207} />
          </Part>
          <Label $w={129} htmlFor="batch">批次</Label>
          <Field id="batch" $w={87} readOnly />
        </Row>
        <Row>
          <Part $w={344}>
            <Label as="span" $w={129}>提货数</Label>
            <Value $w={152} $line $right>0</Value>
            <Value $w={40} $mono>PC</Value>
          </Part>
          <Label $w={129} htmlFor="sort">排序字符串</Label>
          <Field id="sort" $w={87} />
        </Row>
        <Row>
          <Label as="span" $w={129}>允许数量</Label>
          <Value $w={148} $right>0</Value>
        </Row>
      </Rows>
    </Panel>
  );
}

export default function App() {
  return (
    <Page>
      <Global />
      <MenuBar>
        <MenuIcon aria-label="菜单"><Svg w={15} h={12}>{icons.exit}</Svg></MenuIcon>
        {menus.map(([t, k]) => <MenuItem key={k}>{t}(<u>{k}</u>)</MenuItem>)}
      </MenuBar>
      <SystemBar>
        <IconButton aria-label="确认"><Icon n="ok" /></IconButton>
        <Command>
          <input aria-label="命令" />
          <button aria-label="展开"><Svg w={10} h={5}><path d="M0 0h10L5 5z" fill="#1f3a74" /></Svg></button>
        </Command>
        <Collapse aria-label="收起"><Svg w={10} h={10}><path d="M5 1L1 5l4 4M9 1L5 5l4 4" stroke="#444" /></Svg></Collapse>
        <Bar list={systemTools} m={2} />
      </SystemBar>
      <Frame>
        <TitleBar>
          <TitleButton $split aria-label="服务"><Icon n="speech" /><i /><Corner /></TitleButton>
          <Title>项目构造器：项目<span>C-100009</span></Title>
        </TitleBar>
        <AppBar><Bar list={appTools} /></AppBar>
        <Workspace>
          <Side>
            <TreeTools>
              {treeTools.map((n, i) => (n === '|' ? <ToolSep key={i} /> : (
                <GoldButton key={i} $w={n === 'create' ? 32 : 25} $split={n === 'create'} aria-label={n}>
                  <Icon n={n} />{n === 'create' && <Corner />}
                </GoldButton>
              )))}
            </TreeTools>
            <ProjectTree />
            <Grip><Dots cols={6} rows={1} /></Grip>
            <SwitchBar>
              <GoldButton $w={77}><Icon n="star" />工作清单</GoldButton>
              <GoldButton $w={53} $on><Icon n="template" />模板</GoldButton>
            </SwitchBar>
            <TemplateTree />
          </Side>
          <Grip $col><Dots cols={1} rows={6} /></Grip>
          <Detail>
            <IdentityPanel />
            <ItemRow />
            <Tabs>
              <Tab $on>常规数据</Tab>
              <Tab>过程参数</Tab>
              <Tab>长文本</Tab>
              <Tab>分配</Tab>
            </Tabs>
            <TabBody>
              <Scroller><GeneralPanel /></Scroller>
              <ScrollEdge><VScroll skip={1} len={137} /></ScrollEdge>
            </TabBody>
          </Detail>
        </Workspace>
      </Frame>
      <StatusBar><Brand>SAP</Brand></StatusBar>
      <Watermark>CSDN @外行看SAP</Watermark>
    </Page>
  );
}
